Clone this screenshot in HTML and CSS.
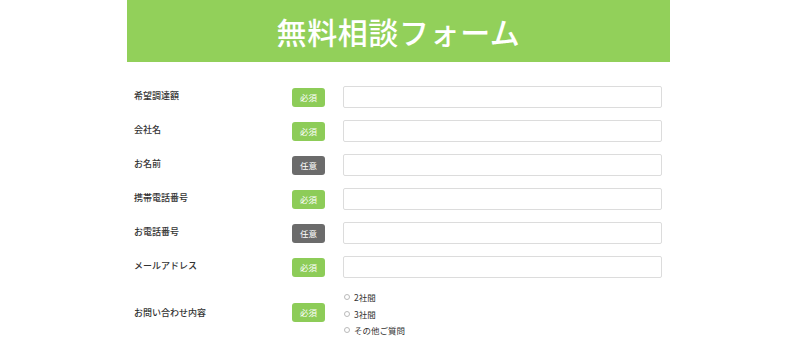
FILE: index.html
```html
<!DOCTYPE html>
<html lang="ja">
<head>
  <meta charset="UTF-8" />
  <meta name="viewport" content="width=device-width, initial-scale=1.0"/>
  <title>無料相談フォーム</title>
  <link rel="stylesheet" href="styles.css">
</head>
<body>
  <div class="wrap">
    <h1>無料相談フォーム</h1>

    <form class="form">
      <div class="row">
        <div class="label">希望調達額</div>
        <span class="badge">必須</span>
        <input type="text" class="field" />
      </div>
      <div class="row">
        <div class="label">会社名</div>
        <span class="badge">必須</span>
        <input type="text" class="field" />
      </div>
      <div class="row">
        <div class="label">お名前</div>
        <span class="badge optional">任意</span>
        <input type="text" class="field" />
      </div>
      <div class="row">
        <div class="label">携帯電話番号</div>
        <span class="badge">必須</span>
        <input type="text" class="field" />
      </div>
      <div class="row">
        <div class="label">お電話番号</div>
        <span class="badge optional">任意</span>
        <input type="text" class="field" />
      </div>
      <div class="row">
        <div class="label">メールアドレス</div>
        <span class="badge">必須</span>
        <input type="text" class="field" />
      </div>
      <div class="row radio-row">
        <div class="label">お問い合わせ内容</div>
        <span class="badge">必須</span>
        <div class="radios">
          <label class="radio"><input type="radio" name="kind" /> 2社間</label>
          <label class="radio"><input type="radio" name="kind" /> 3社間</label>
          <label class="radio"><input type="radio" name="kind" /> その他ご質問</label>
        </div>
      </div>
      <div class="row">
        <div class="label"></div>
        <span class="badge blank"></span>
        <textarea class="field area"></textarea>
      </div>
    </form>
  </div>
</body>
</html>
```

FILE: styles.css
```css
body {
  margin: 0;
  background-color: #fff;
  color: #333;
  font-family: "Noto Sans CJK JP", "Noto Sans", sans-serif;
}
.wrap {
  width: 543px;
  margin-left: 127px;
}
h1 {
  margin: 0;
  height: 62px;
  line-height: 62px;
  background-color: #92d05a;
  color: white;
  font-size: 30px;
  font-weight: 500;
  text-align: center;
  letter-spacing: 0.6px;
}
.form {
  padding-top: 18px;
}
.row {
  display: flex;
  align-items: center;
  padding: 6px 8px 6px 7px;
  height: 22px;
}
.label {
  width: 158px;
  font-size: 9px;
  font-weight: 500;
  margin-bottom: 4px;
}
.badge {
  width: 33px;
  height: 19px;
  line-height: 19px;
  border-radius: 3px;
  background-color: #8dcc58;
  color: white;
  font-size: 8.5px;
  text-align: center;
  margin-right: 18px;
  flex-shrink: 0;
}
.badge.optional {
  background-color: #6b6b6b;
}
.badge.blank {
  background: none;
}
.field {
  box-sizing: border-box;
  width: 319px;
  height: 22px;
  border: 1px solid #dcdcdc;
  border-radius: 2px;
  margin: 0;
  padding: 0;
}
.radio-row {
  height: auto;
  padding-top: 5px;
  padding-bottom: 10px;
}
.radio-row .label,
.radio-row .badge {
  margin-bottom: 2px;
}
.radios {
  display: flex;
  flex-direction: column;
}
.radio {
  display: flex;
  align-items: center;
  height: 16.5px;
  font-size: 8.5px;
  color: #333;
}
.radio input {
  width: 6px;
  height: 6px;
  margin: 0 4px 0 1px;
  opacity: 0.5;
}
.area {
  height: 60px;
  align-self: flex-start;
}
```
